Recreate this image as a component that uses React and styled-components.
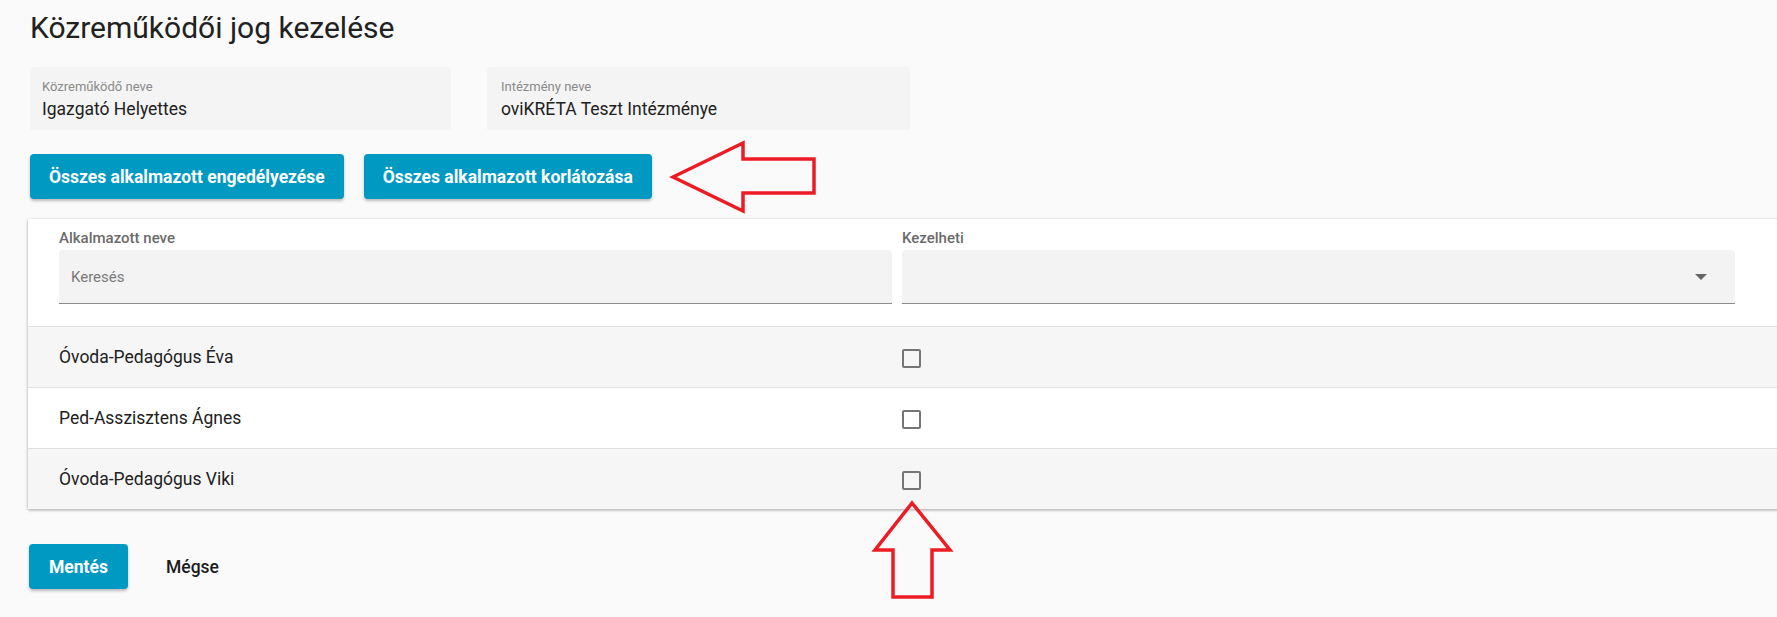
import React from "react";
import styled, { createGlobalStyle } from "styled-components";

const GlobalStyle = createGlobalStyle`
  body {
    margin: 0;
    background: #fafafa;
    font-family: Roboto, "Liberation Sans", sans-serif;
    color: #212121;
    overflow: hidden;
  }
`;

const employees = [
  { name: "Óvoda-Pedagógus Éva" },
  { name: "Ped-Asszisztens Ágnes" },
  { name: "Óvoda-Pedagógus Viki" },
];

export default function App() {
  return (
    <Page>
      <GlobalStyle />
      <Title>Közreműködői jog kezelése</Title>

      <Fields>
        <Field>
          <FieldLabel>Közreműködő neve</FieldLabel>
          <FieldValue>Igazgató Helyettes</FieldValue>
        </Field>
        <Field wide>
          <FieldLabel>Intézmény neve</FieldLabel>
          <FieldValue>oviKRÉTA Teszt Intézménye</FieldValue>
        </Field>
      </Fields>

      <Actions>
        <Button>Összes alkalmazott engedélyezése</Button>
        <Button>Összes alkalmazott korlátozása</Button>
        <LeftArrow width="150" height="74" viewBox="668 140 150 74">
          <polygon
            points="672,177 742,143 742,159 813,159 813,193 742,193 742,211"
            fill="none"
            stroke="#ed1c24"
            strokeWidth="3.5"
          />
        </LeftArrow>
      </Actions>

      <Card>
        <HeaderRow>
          <Column>
            <ColumnLabel>Alkalmazott neve</ColumnLabel>
            <Input>Keresés</Input>
          </Column>
          <Column>
            <ColumnLabel>Kezelheti</ColumnLabel>
            <Input>
              <Caret />
            </Input>
          </Column>
        </HeaderRow>
        {employees.map((e, i) => (
          <Row key={e.name} striped={i % 2 === 0}>
            <Name>{e.name}</Name>
            <Cell>
              <Checkbox />
            </Cell>
          </Row>
        ))}
      </Card>

      <Footer>
        <Button small>Mentés</Button>
        <TextButton>Mégse</TextButton>
        <UpArrow width="84" height="100" viewBox="870 500 84 100">
          <polygon
            points="912,503 950,550 932,550 932,597 893,597 893,550 875,550"
            fill="none"
            stroke="#ed1c24"
            strokeWidth="3.5"
          />
        </UpArrow>
      </Footer>
    </Page>
  );
}

const Page = styled.div`
  padding: 11px 0 0 30px;
  overflow: hidden;
`;

const Title = styled.h1`
  margin: 0;
  font-size: 30px;
  font-weight: 400;
  line-height: 34px;
  color: #212121;
`;

const Fields = styled.div`
  display: flex;
  gap: 36px;
  margin-top: 22px;
`;

const Field = styled.div`
  width: ${(p) => (p.wide ? "423px" : "421px")};
  box-sizing: border-box;
  background: #f4f4f4;
  border-radius: 4px 4px 0 0;
  padding: 12px 12px 11px ${(p) => (p.wide ? "14px" : "12px")};
`;

const FieldLabel = styled.div`
  font-size: 13px;
  line-height: 16px;
  color: #8a8a8a;
`;

const FieldValue = styled.div`
  font-size: 17.5px;
  line-height: 20px;
  margin-top: 4px;
  color: #212121;
`;

const Actions = styled.div`
  display: flex;
  align-items: center;
  gap: 20px;
  margin-top: 24px;
`;

const Button = styled.button`
  height: 45px;
  padding: 0 ${(p) => (p.small ? "20px" : "19px")};
  border: none;
  border-radius: 4px;
  background: #0099c2;
  color: #fff;
  font-family: Roboto, "Liberation Sans", sans-serif;
  font-size: 17.5px;
  font-weight: 700;
  box-shadow: 0 2px 3px rgba(0, 0, 0, 0.25);
`;

const TextButton = styled.button`
  height: 45px;
  padding: 0 19px;
  border: none;
  background: transparent;
  color: #1c1c1c;
  font-family: Roboto, "Liberation Sans", sans-serif;
  font-size: 17.5px;
  font-weight: 500;
`;

const LeftArrow = styled.svg`
  margin: -15px 0 -15px -3px;
`;

const Card = styled.div`
  margin: 20px -80px 0 -2px;
  background: #fff;
  box-shadow: 0 1px 3px rgba(0, 0, 0, 0.35);
`;

const HeaderRow = styled.div`
  display: grid;
  grid-template-columns: 833px 833px;
  gap: 10px;
  padding: 11px 31px 22px;
`;

const Column = styled.div`
  display: flex;
  flex-direction: column;
  gap: 4px;
`;

const ColumnLabel = styled.div`
  font-size: 15px;
  line-height: 16px;
  font-weight: 500;
  color: #6b6b6b;
`;

const Input = styled.div`
  position: relative;
  height: 53px;
  display: flex;
  align-items: center;
  padding: 0 12px;
  background: #f3f3f3;
  border-radius: 4px 4px 0 0;
  border-bottom: 1px solid #8c8c8c;
  font-size: 15px;
  color: #7a7a7a;
`;

const Caret = styled.span`
  margin-left: auto;
  margin-right: 16px;
  border-left: 6px solid transparent;
  border-right: 6px solid transparent;
  border-top: 6px solid #666;
`;

const Row = styled.div`
  display: grid;
  grid-template-columns: 833px 833px;
  gap: 10px;
  align-items: center;
  height: 60px;
  padding: 0 31px;
  border-top: 1px solid #e0e0e0;
  background: ${(p) => (p.striped ? "#f6f6f6" : "#fff")};
`;

const Name = styled.div`
  font-size: 17.5px;
  color: #212121;
`;

const Cell = styled.div`
  display: flex;
  align-items: center;
  padding-top: 2px;
`;

const Checkbox = styled.span`
  width: 19px;
  height: 19px;
  box-sizing: border-box;
  border: 2px solid #757575;
  border-radius: 2px;
`;

const Footer = styled.div`
  position: relative;
  display: flex;
  align-items: center;
  gap: 19px;
  margin: 35px 0 0 -1px;
  padding-bottom: 27px;
`;

const UpArrow = styled.svg`
  position: absolute;
  left: 841px;
  top: -44px;
`;
